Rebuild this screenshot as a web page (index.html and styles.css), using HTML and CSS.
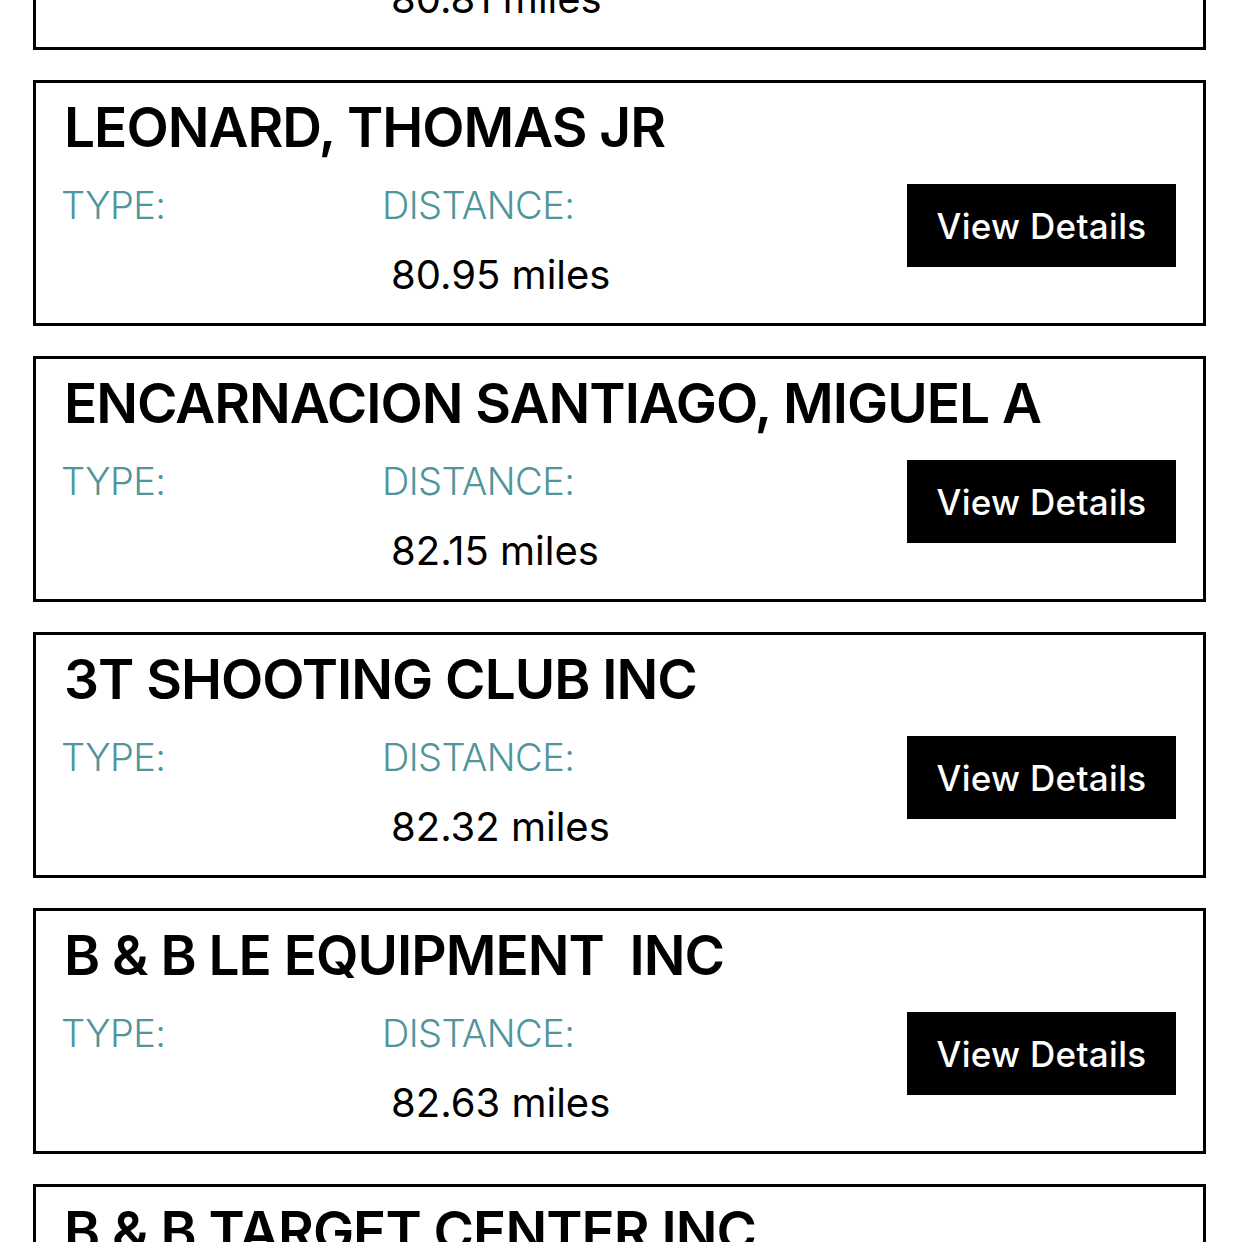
FILE: index.html
```html
<!DOCTYPE html>
<html lang="en">
<head>
<meta charset="utf-8">
<title>Dealers</title>
<link rel="stylesheet" href="styles.css">
</head>
<body>
<main class="list">
  <article class="card">
    <h2 class="name">ANDERSON, JAMES R</h2>
    <div class="row">
      <div class="info">
        <div class="col col-type"><span class="label">TYPE:</span></div>
        <div class="col col-dist"><span class="label">DISTANCE:</span><span class="value">80.81 miles</span></div>
      </div>
      <a class="btn" href="#">View Details</a>
    </div>
  </article>
  <article class="card">
    <h2 class="name">LEONARD, THOMAS JR</h2>
    <div class="row">
      <div class="info">
        <div class="col col-type"><span class="label">TYPE:</span></div>
        <div class="col col-dist"><span class="label">DISTANCE:</span><span class="value">80.95 miles</span></div>
      </div>
      <a class="btn" href="#">View Details</a>
    </div>
  </article>
  <article class="card">
    <h2 class="name">ENCARNACION SANTIAGO, MIGUEL A</h2>
    <div class="row">
      <div class="info">
        <div class="col col-type"><span class="label">TYPE:</span></div>
        <div class="col col-dist"><span class="label">DISTANCE:</span><span class="value">82.15 miles</span></div>
      </div>
      <a class="btn" href="#">View Details</a>
    </div>
  </article>
  <article class="card">
    <h2 class="name">3T SHOOTING CLUB INC</h2>
    <div class="row">
      <div class="info">
        <div class="col col-type"><span class="label">TYPE:</span></div>
        <div class="col col-dist"><span class="label">DISTANCE:</span><span class="value">82.32 miles</span></div>
      </div>
      <a class="btn" href="#">View Details</a>
    </div>
  </article>
  <article class="card">
    <h2 class="name">B &amp; B LE EQUIPMENT&nbsp; INC</h2>
    <div class="row">
      <div class="info">
        <div class="col col-type"><span class="label">TYPE:</span></div>
        <div class="col col-dist"><span class="label">DISTANCE:</span><span class="value">82.63 miles</span></div>
      </div>
      <a class="btn" href="#">View Details</a>
    </div>
  </article>
  <article class="card">
    <h2 class="name">B &amp; B TARGET CENTER INC</h2>
    <div class="row">
      <div class="info">
        <div class="col col-type"><span class="label">TYPE:</span></div>
        <div class="col col-dist"><span class="label">DISTANCE:</span><span class="value">83.10 miles</span></div>
      </div>
      <a class="btn" href="#">View Details</a>
    </div>
  </article>
</main>
</body>
</html>
```

FILE: styles.css
```css
* { box-sizing: border-box; }
html, body { margin: 0; padding: 0; background: #fff; }
body {
  font-family: Inter, "Noto Sans", "DejaVu Sans", sans-serif;
  color: #000;
  overflow: hidden;
  height: 1242px;
}
.list {
  display: flex;
  flex-direction: column;
  gap: 30px;
  padding: 0 33px;
  margin-top: -196px;
}
.card {
  border: 3px solid #000;
  height: 246px;
  padding: 17px 27px 0 28px;
}
.name {
  margin: 0;
  font-size: 55px;
  line-height: 1;
  font-weight: 600;
  letter-spacing: -1px;
  white-space: pre;
}
.row {
  display: flex;
  align-items: flex-start;
  justify-content: space-between;
  margin-top: 31px;
}
.info {
  display: flex;
  margin-left: -3px;
}
.col {
  display: flex;
  flex-direction: column;
}
.col-type { width: 321px; }
.label {
  font-size: 38px;
  line-height: 1;
  font-weight: 300;
  letter-spacing: -0.6px;
  color: #4f959b;
}
.value {
  font-size: 40px;
  line-height: 1;
  font-weight: 400;
  margin-top: 31px;
  padding-left: 9px;
}
.btn {
  display: flex;
  align-items: center;
  justify-content: center;
  width: 269px;
  height: 83px;
  margin-top: -2px;
  background: #000;
  color: #fff;
  text-decoration: none;
  font-size: 35px;
  font-weight: 500;
  letter-spacing: 0.3px;
}
```
